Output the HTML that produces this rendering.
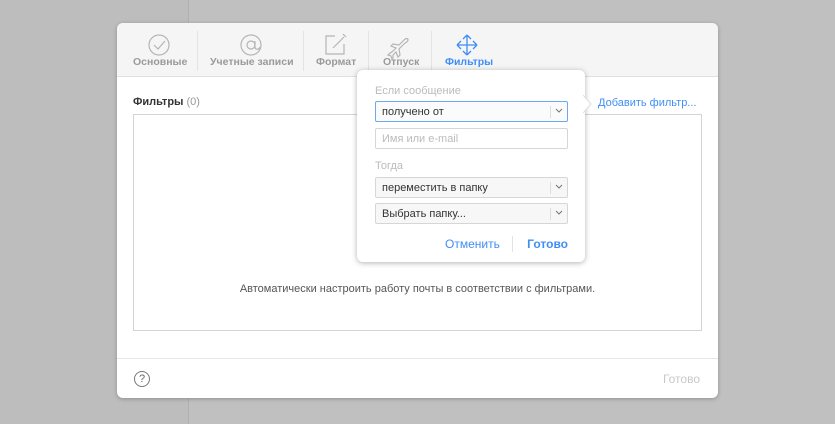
<!DOCTYPE html>
<html><head><meta charset="utf-8"><style>
*{box-sizing:border-box;margin:0;padding:0}
body{width:835px;height:424px;background:#c0c0c0;position:relative;overflow:hidden;font-family:"Liberation Sans",sans-serif}
.abs{position:absolute}
.strip{left:0;top:0;width:189px;height:424px;background:#bdbdbd;border-right:1px solid #b0b0b0}
.dlg{left:117px;top:23px;width:601px;height:375px;background:#fff;border-radius:6px;box-shadow:0 1px 4px rgba(0,0,0,.25);overflow:hidden}
.tb{left:0;top:0;width:601px;height:54px;background:#f5f5f5;border-bottom:1px solid #e0e0e0}
.lbl{font-size:10.5px;color:#9a9a9a;font-weight:bold;top:33px;white-space:nowrap}
.sep{top:8px;width:1px;height:40px;background:#e3e3e3}
.t{font-size:11px;white-space:nowrap}
.pop{left:357px;top:70px;width:228px;height:192px;background:#fff;border-radius:6px;box-shadow:0 1px 6px rgba(0,0,0,.3)}
.fld{left:18px;width:193px;height:21px;border:1px solid #d6d6d6;border-radius:2px;background:#f7f7f7;font-size:11px;color:#333;padding:4px 6px}
.fld .dv{position:absolute;right:16px;top:4px;width:1px;height:12px;background:#ddd}
.fld .ch{position:absolute;right:4px;top:6px}
</style></head><body>
<div class="abs strip"></div>
<div class="abs dlg">
 <div class="abs tb">
  <svg class="abs" style="left:0;top:0" width="601" height="54">
   <g fill="none" stroke="#b5b5b5" stroke-width="1.2">
    <circle cx="42" cy="22" r="10"/><path d="M37 22l4 4 7-8"/>
    <circle cx="134" cy="22" r="10"/><circle cx="134" cy="22" r="4"/><path d="M138 18v6c0 3 4 3 5 0"/>
    <path d="M218 13h-9v18h18v-10"/><path d="M216 25l11-11" /><path d="M226 11l3 3"/>
    <path d="M276 30l3-3-5-2 2-2 6 1 5-5c2-2 4-2 4 0s-2 2-4 4l-5 5 1 6-2 2-2-5-3 3 0 3-1 1-1-3-3-1 1-1z" transform="translate(0,-2)"/>
   </g>
   <g fill="none" stroke="#3f8ef5" stroke-width="1.3">
    <path d="M350 12v20M340 22h20M350 12l-4 4M350 12l4 4M350 32l-4-4M350 32l4-4M340 22l4-4M340 22l4 4M360 22l-4-4M360 22l-4 4"/>
   </g>
  </svg>
  <div class="abs lbl" style="left:16px">Основные</div>
  <div class="abs sep" style="left:80px"></div>
  <div class="abs lbl" style="left:93px">Учетные записи</div>
  <div class="abs sep" style="left:186px"></div>
  <div class="abs lbl" style="left:199px">Формат</div>
  <div class="abs sep" style="left:251px"></div>
  <div class="abs lbl" style="left:266px">Отпуск</div>
  <div class="abs sep" style="left:314px"></div>
  <div class="abs lbl" style="left:328px;color:#3f8ef5">Фильтры</div>
 </div>
 <div class="abs t" style="left:16px;top:73px;color:#333"><b style="font-weight:600">Фильтры</b> <span style="color:#999">(0)</span></div>
 <div class="abs t" style="left:481px;top:74px;color:#3f8ef5">Добавить фильтр...</div>
 <div class="abs" style="left:16px;top:91px;width:569px;height:217px;border:1px solid #d4d4d4"></div>
 <div class="abs t" style="left:16px;top:260px;width:569px;text-align:center;color:#555">Автоматически настроить работу почты в соответствии с фильтрами.</div>
 <div class="abs" style="left:0;top:335px;width:601px;height:1px;background:#e6e6e6"></div>
 <div class="abs" style="left:17px;top:348px;width:16px;height:16px;border:1px solid #777;border-radius:50%;font-size:11px;color:#666;text-align:center;line-height:14px">?</div>
 <div class="abs" style="right:18px;top:349px;font-size:12px;color:#c8c8c8">Готово</div>
</div>
<div class="abs pop">
 <svg class="abs" style="left:226px;top:25px" width="10" height="18"><path d="M0 0l8 9-8 9" fill="#fff" stroke="#ddd"/></svg>
 <div class="abs t" style="left:18px;top:15px;color:#bbb">Если сообщение</div>
 <div class="abs fld" style="top:31px;border-color:#6ea8f0;background:#fbfbfb">получено от<span class="dv"></span><svg class="ch" width="8" height="6"><path d="M1 1l3 3 3-3" fill="none" stroke="#777"/></svg></div>
 <div class="abs fld" style="top:58px;background:#fff;color:#bbb">Имя или e-mail</div>
 <div class="abs t" style="left:18px;top:90px;color:#bbb">Тогда</div>
 <div class="abs fld" style="top:107px">переместить в папку<span class="dv"></span><svg class="ch" width="8" height="6"><path d="M1 1l3 3 3-3" fill="none" stroke="#777"/></svg></div>
 <div class="abs fld" style="top:133px">Выбрать папку...<span class="dv"></span><svg class="ch" width="8" height="6"><path d="M1 1l3 3 3-3" fill="none" stroke="#777"/></svg></div>
 <div class="abs" style="left:88px;top:167px;font-size:12px;color:#3f8ef5">Отменить</div>
 <div class="abs" style="left:155px;top:166px;width:1px;height:16px;background:#e3e3e3"></div>
 <div class="abs" style="right:17px;top:167px;font-size:12px;color:#3f8ef5;font-weight:bold">Готово</div>
</div>
</body></html>
